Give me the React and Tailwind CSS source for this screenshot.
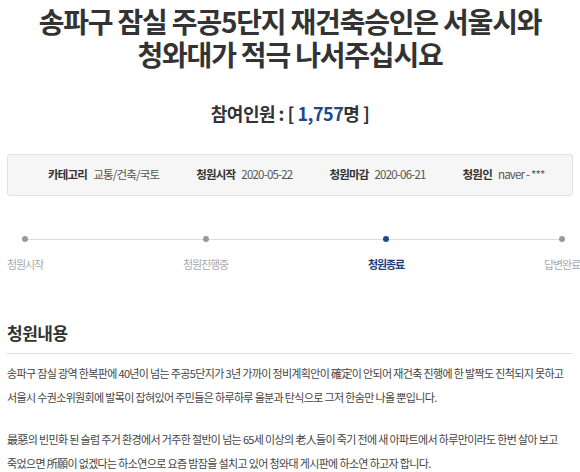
import React from "react";

const font = { fontFamily: '"Noto Sans CJK KR", "Noto Sans", sans-serif' };

const info = [
  { label: "카테고리", value: "교통/건축/국토" },
  { label: "청원시작", value: "2020-05-22" },
  { label: "청원마감", value: "2020-06-21" },
  { label: "청원인", value: "naver - ***" },
];

const steps = [
  { label: "청원시작", active: false },
  { label: "청원진행중", active: false },
  { label: "청원종료", active: true },
  { label: "답변완료", active: false },
];

export default function App() {
  return (
    <div className="min-h-screen overflow-hidden bg-white px-[7px] pt-[5px] text-[#333]" style={font}>
      {/* Title */}
      <h1 className="text-center text-[28px] font-bold leading-[33px] tracking-[-1.2px] text-[#333]">
        송파구 잠실 주공5단지 재건축승인은 서울시와
        <br />
        청와대가 적극 나서주십시요
      </h1>

      {/* Count */}
      <div className="mt-[30px] text-center text-[18px] font-bold leading-[24px] tracking-[-0.5px] text-[#333]">
        참여인원 : [ <span className="text-[#1d4a8a]">1,757</span>명 ]
      </div>

      {/* Info box */}
      <div className="mt-[29px] flex h-[42px] items-center gap-[37px] rounded-[3px] border border-[#e1e1e1] bg-[#f6f6f6] pl-[40px]">
        {info.map((item) => (
          <div key={item.label} className="flex items-center gap-[6px]">
            <span className="text-[11.5px] font-bold tracking-[-0.8px] text-[#333]">{item.label}</span>
            <span className="text-[11.5px] tracking-[-0.8px] text-[#555]">{item.value}</span>
          </div>
        ))}
      </div>

      {/* Progress */}
      <div className="relative -mr-[7px] mt-[40px] flex justify-between">
        <div className="absolute left-[19px] right-[18px] top-[2.5px] h-px bg-[#dcdcdc]" />
        {steps.map((s) => (
          <div key={s.label} className="relative flex flex-col items-center">
            <span className={`block h-[6px] w-[6px] rounded-full ${s.active ? "bg-[#1d4a8a]" : "bg-[#9a9a9a]"}`} />
            <span
              className={`mt-[14px] whitespace-nowrap text-[11px] leading-[16px] tracking-[-1.1px] ${
                s.active ? "font-bold text-[#1d3f7a]" : "text-[#aaa]"
              }`}
            >
              {s.label}
            </span>
          </div>
        ))}
      </div>

      {/* Content */}
      <h2 className="mt-[50px] text-[17px] font-bold leading-[22px] tracking-[-0.5px] text-[#333]">청원내용</h2>
      <div className="mt-[9px] h-px bg-[#dedede]" />
      <div className="mt-[7px] text-[11px] leading-[24px] tracking-[-0.65px] text-[#444]">
        <p>
          송파구 잠실 광역 한복판에 40년이 넘는 주공5단지가 3년 가까이 정비계획안이 確定이 안되어 재건축 진행에 한 발짝도 진척되지 못하고
          <br />
          서울시 수권소위원회에 발목이 잡혀있어 주민들은 하루하루 울분과 탄식으로 그저 한숨만 나올 뿐입니다.
        </p>
        <p className="mt-[18px]">
          最惡의 빈민화 된 슬럼 주거 환경에서 거주한 절반이 넘는 65세 이상의 老人들이 죽기 전에 새 아파트에서 하루만이라도 한번 살아 보고
          <br />
          죽었으면 所願이 없겠다는 하소연으로 요즘 밤잠을 설치고 있어 청와대 게시판에 하소연 하고자 합니다.
        </p>
      </div>
    </div>
  );
}
